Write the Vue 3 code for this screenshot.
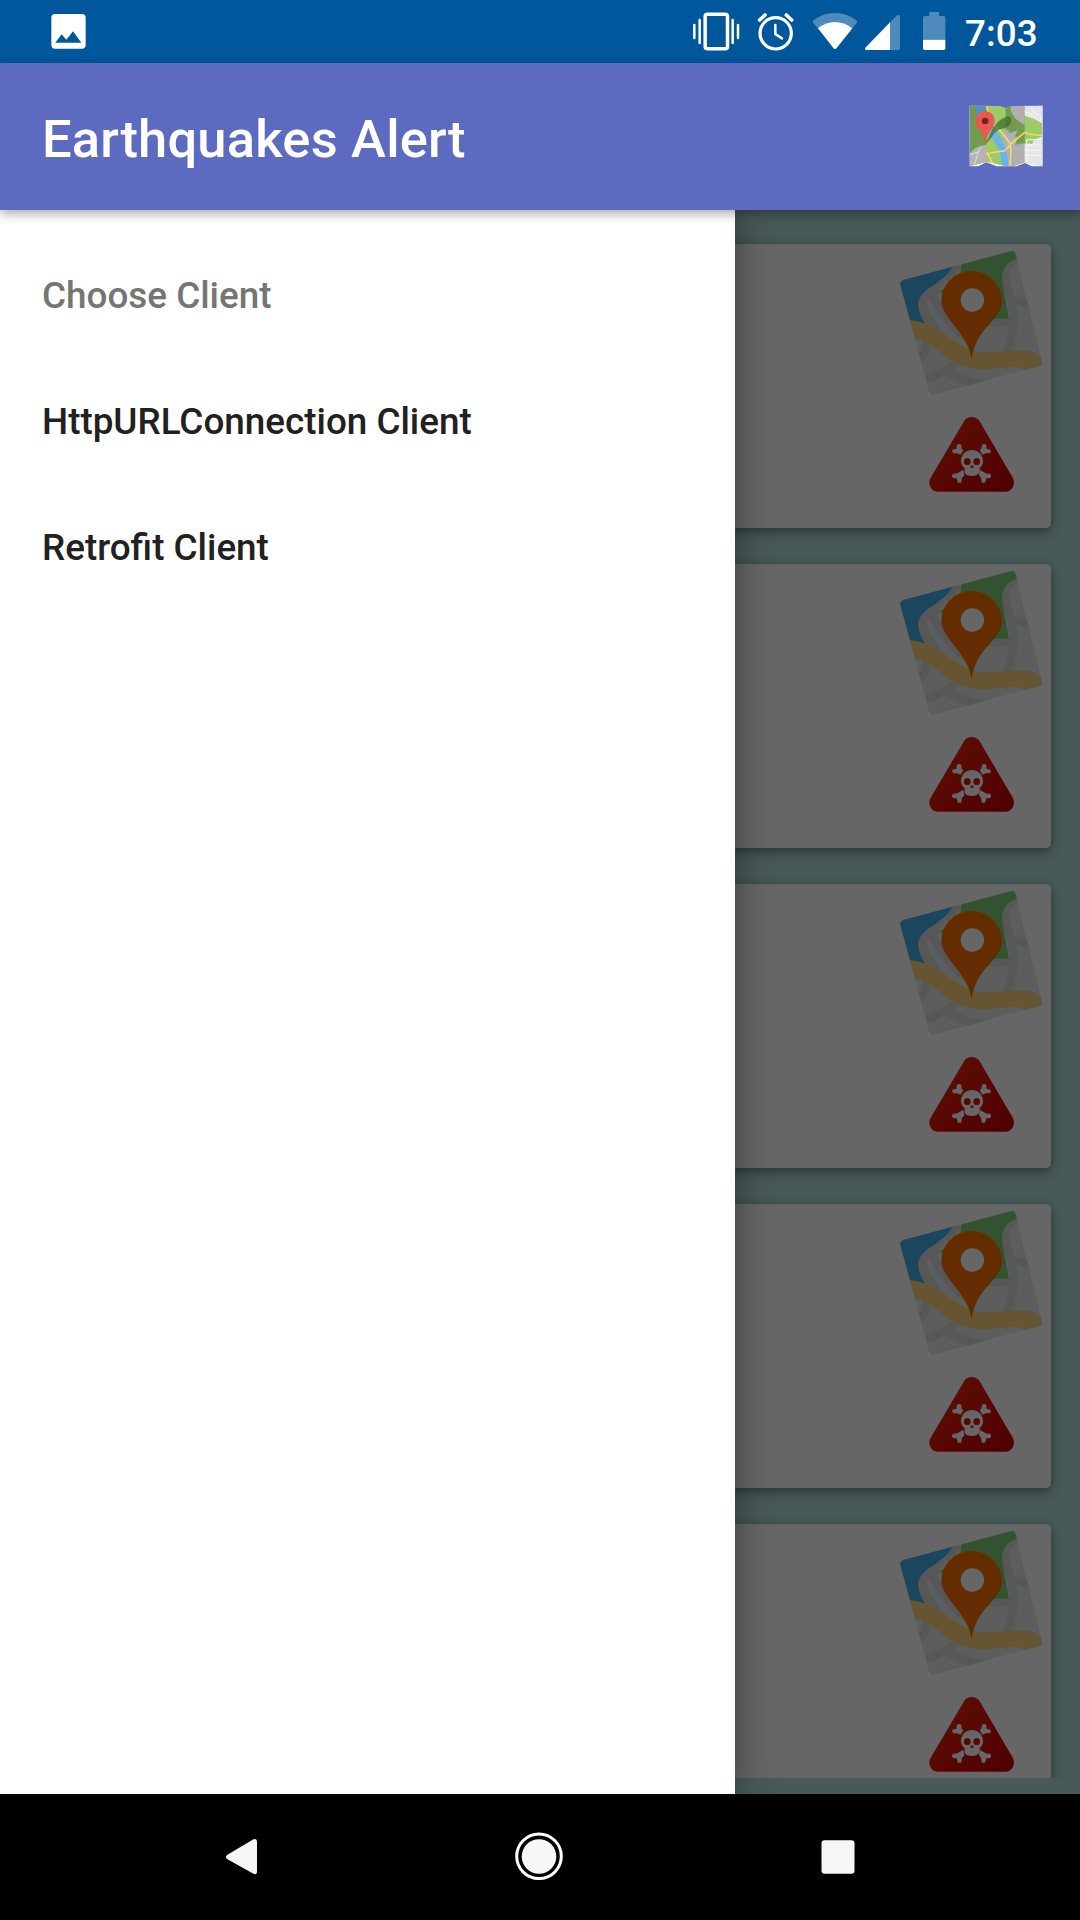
<script setup>
const clients = ['HttpURLConnection Client', 'Retrofit Client']
const cards = [1, 2, 3, 4, 5]
</script>

<template>
  <div class="screen">
    <header class="status">
      <svg class="picture" viewBox="150 0 111 189">
        <path fill="#fff" fill-rule="evenodd" d="M165 42H246Q257 42 257 53V135Q257 146 246 146H165Q154 146 154 135V53Q154 42 165 42ZM166 128H244L219 94L199 119L185 103Z" />
      </svg>
      <div class="indicators">
        <svg class="vibrate" viewBox="36 0 144 189">
          <rect x="75.500" y="42.500" width="67" height="104" rx="7" fill="none" stroke="#fff" stroke-width="10.500" />
          <path stroke="#fff" stroke-width="7.500" stroke-linecap="round" d="M59 60V129M158 60V129M43 75V114M174 75V114" />
        </svg>
        <svg class="alarm" viewBox="228 0 117 189">
          <circle cx="287" cy="100" r="47" fill="none" stroke="#fff" stroke-width="9.500" />
          <path fill="none" stroke="#fff" stroke-width="7.500" stroke-linecap="round" d="M286 75V102L306 115" />
          <path fill="none" stroke="#fff" stroke-width="11" stroke-linecap="round" d="M239 60L255 45M335 60L319 45" />
        </svg>
        <svg class="wifi" viewBox="396 0 138 189">
          <path fill="#4f8bba" d="M465 147L400 69Q396 64 401 61Q429 39 465 39Q501 39 529 61Q534 64 530 69Z" />
          <path fill="#fff" d="M460 144L414 85Q438 66 465 66Q492 66 517 85L470 144Q465 150 460 144Z" />
        </svg>
        <svg class="signal" viewBox="552 0 111 189">
          <path fill="#4f8bba" d="M629 68L651 46Q660 42 660 50V145Q660 150 655 150H629Z" />
          <path fill="#fff" d="M630 67V150H560Q552 149 556 143Z" />
        </svg>
        <svg class="battery" viewBox="726 0 72 189">
          <path fill="#4f8bba" d="M748 36H777V48H791Q796 48 796 53V119H729V53Q729 48 734 48H748Z" />
          <path fill="#fff" d="M729 119H796V145Q796 150 791 150H734Q729 150 729 145Z" />
        </svg>
        <span class="time">7:03</span>
      </div>
    </header>

    <div class="appbar">
      <h1>Earthquakes Alert</h1>
      <svg class="maplogo" viewBox="57 45 222 186">
        <defs>
          <clipPath id="fold"><path d="M59 48H149L167 54L188 48H277V228L224 217L190 228H167L109 215L59 228Z" /></clipPath>
        </defs>
        <path fill="#f6f6f8" d="M59 47L149 48L167 56L188 48L278 47V229H245L225 219L200 229H140L109 217L85 229H59Z" />
        <g clip-path="url(#fold)">
          <path fill="#9ccc65" d="M59 48H277V228H59Z" />
          <path fill="#729b4d" d="M59 48H110V228H59Z" />
          <path fill="#b4b4b6" d="M59 190Q80 165 111 164V228H59Z" />
          <path fill="#739c4e" d="M167 48H224V140H167Z" />
          <path fill="#b0b0b2" d="M181 48H224V105L205 93Q180 73 181 48Z" />
          <path fill="#e5e5e7" d="M224 48H277V100Q251 84 224 77Z" />
          <path fill="#b0b0b2" d="M150 125L174 119L179 129L203 121L190 151L224 163V228H163L164 158Z" />
          <path fill="#e6e6e8" d="M224 165L277 139V228H224Z" />
          <path fill="#9ccc65" d="M224 128L277 136V140L252 142L247 162L224 158Z" />
          <path fill="#739c4e" d="M203 142L224 128V160L196 164Z" />
          <path fill="#5192b7" d="M75 48H109L112 78L87 92Q71 71 75 48Z" />
          <path fill="#68b4e9" d="M118 103Q170 143 175 228H154Q148 160 115 133Z" />
          <path fill="#9ccc65" d="M106 165L124 147Q153 179 156 228H140Q130 198 106 174Z" />
          <path fill="none" stroke="#fdda65" stroke-width="4.500" d="M109 48L117 76M131 104Q170 141 181 163L223 128Q245 136 277 136M109 193Q129 185 163 183M110 186L132 228M181 163Q184 183 180 228M163 183L180 166" />
          <path fill="none" stroke="#dedede" stroke-width="3" d="M59 195L84 186L94 171M86 181L74 224" />
          <path fill="none" stroke="#f6f6f8" stroke-width="3" d="M229 150L277 147M224 165H277M224 181H277M224 196H277M230 148V216M243 52Q251 73 272 76V91M224 65L246 73L277 99" />
        </g>
        <path fill="#3d692f" fill-opacity=".72" d="M105 164L131 110Q151 84 170 80Q184 78 184 90Q183 108 164 115Q139 116 124 143Z" />
        <path fill="#e95950" d="M105 166Q105 141 91 122Q75 111 76 92A29 29 0 0 1 134 92Q134 108 121 122Q109 140 105 166Z" />
        <circle cx="105.500" cy="93" r="10" fill="#702321" />
      </svg>
    </div>

    <main class="body">
      <div class="list">
        <article v-for="card in cards" :key="card" class="card">
          <svg class="mappin" viewBox="60 45 432 435">
            <defs>
              <clipPath :id="'sheet' + card"><path d="M70 135L394 48Q403 46 406 55L487 382Q489 389 481 392L160 479Q151 481 148 472L61 149Q59 139 70 135Z" /></clipPath>
            </defs>
            <g :clip-path="`url(#sheet${card})`">
              <path fill="#e4eae7" d="M50 40H500V490H50Z" />
              <path fill="none" stroke="#dadada" stroke-width="25" d="M232 75C236 133 129 135 129 204C129 243 155 270 175 288M156 176C179 244 230 294 275 310M310 260L403 262M423 62C368 84 374 133 383 164C413 238 404 298 372 365M397 196Q430 196 455 210M136 315Q145 342 120 372M130 437C179 422 216 397 255 360M195 402Q242 441 305 445" />
              <path fill="#46acea" d="M50 125L217 94Q212 116 163 149C116 175 109 200 119 232Q123 249 139 270L85 257Z" />
              <path fill="#80ce78" d="M245 80L400 40L413 69Q357 88 368 146L387 253L300 248L178 170L240 125Z" />
              <path fill="none" stroke="#dadada" stroke-width="23" d="M154 177L176 160" />
              <path fill="#fdd77b" d="M85 257C128 254 163 280 203 304C247 330 264 350 305 352C352 354 387 344 436 345Q479 350 490 387L460 411H440Q428 396 414 396C368 394 337 405 292 402C215 395 182 343 132 320Q117 310 95 314Z" />
            </g>
            <path fill="#f96e00" fill-rule="evenodd" d="M275 376C272 335 242 295 216 263C198 239 184 222 184 197A91 89 0 0 1 366 197C366 222 351 241 331 264C305 292 278 329 275 376ZM277 160A35 35 0 1 0 277 230A35 35 0 1 0 277 160Z" />
            <circle cx="277" cy="195" r="35" fill="#fff" />
          </svg>
          <svg class="danger" viewBox="57 48 258 231">
            <defs>
              <linearGradient :id="'red' + card" x1="0" y1="0" x2="1" y2="1">
                <stop offset=".2" stop-color="#e62206" />
                <stop offset=".95" stop-color="#c40009" />
              </linearGradient>
            </defs>
            <path :fill="`url(#red${card})`" d="M163 62Q171 51 185 51Q199 51 208 62L307 231Q315 246 309 260Q301 275 286 275H83Q68 275 61 261Q54 247 62 233Z" />
            <g fill="#fff">
              <path d="M140 135Q146 130 154 134L155 146L160 151L151 164L142 160H130Q125 155 127 149Q132 147 140 146Z" />
              <path d="M229 135Q223 130 216 134L214 146L209 151L218 164L227 160H239Q244 155 242 149Q237 147 229 146Z" />
              <path d="M160 209L139 221Q130 220 126 225Q125 232 130 235H140L143 247Q149 250 154 247L156 234L163 226Z" />
              <path d="M209 209L230 221Q239 220 243 225Q244 232 239 235H229L226 247Q220 250 215 247L213 234L207 224Z" />
              <path d="M186 150C207 150 219 166 219 184Q219 196 209 204V217Q202 228 186 228Q170 228 164 219V205Q153 196 153 184C153 166 165 150 186 150Z" />
            </g>
            <g fill="#d61008">
              <circle cx="172" cy="185" r="10" /><circle cx="200" cy="185" r="10" />
              <path d="M186 194L191 201Q190 205 186 203Q182 205 181 201Z" />
            </g>
          </svg>
        </article>
      </div>
      <div class="scrim"></div>
      <nav class="drawer">
        <p class="heading">Choose Client</p>
        <p v-for="client in clients" :key="client">{{ client }}</p>
      </nav>
    </main>

    <footer class="navbar">
      <svg class="back" viewBox="0 0 34 126"><path fill="#f7f7f7" d="M2 61L28 45.500Q32 44 32 48V77Q32 82 28 79.500L2 65Q0 63 2 61Z" /></svg>
      <svg class="home" viewBox="0 0 50 126">
        <circle cx="25" cy="62.300" r="22.300" fill="none" stroke="#fff" stroke-width="3" />
        <circle cx="25" cy="62.500" r="17.300" fill="#f7f7f7" />
      </svg>
      <svg class="recent" viewBox="0 0 34 126"><rect x=".5" y="46.300" width="33" height="33.500" rx="3" fill="#f7f7f7" /></svg>
    </footer>
  </div>
</template>

<style>
html, body { margin: 0; background: #000; }
</style>

<style scoped>
.screen {
  width: 1080px;
  height: 1920px;
  display: flex;
  flex-direction: column;
  overflow: hidden;
  font-family: Roboto, "Noto Sans", sans-serif;
  font-weight: 500;
}
svg { display: block; flex: none; }
.status {
  height: 63px;
  flex: none;
  display: flex;
  justify-content: space-between;
  background: #01579b;
  color: #fff;
}
.status svg { height: 63px; }
.picture { width: 37px; margin-left: 50px; }
.indicators { display: flex; width: 388px; }
.vibrate { width: 48px; }
.alarm { width: 39px; margin-left: 16px; }
.wifi { width: 46px; margin-left: 17px; }
.signal { width: 37px; margin-left: 6px; }
.battery { width: 24px; margin-left: 21px; }
.time { margin-left: 19px; font-size: 36.75px; line-height: 67px; letter-spacing: .1px; }
.appbar {
  position: relative;
  z-index: 2;
  height: 147px;
  flex: none;
  display: flex;
  justify-content: space-between;
  background: #5c6bc0;
  color: #fff;
  box-shadow: 0 4px 10px rgba(0, 0, 0, .32);
}
h1 {
  margin: 0 0 0 42px;
  font-size: 52.5px;
  font-weight: 500;
  line-height: 152px;
  letter-spacing: .2px;
}
.maplogo { width: 74px; height: 62px; margin: 42px 37px 0 0; }
.body {
  position: relative;
  height: 1584px;
  flex: none;
  overflow: hidden;
  background: #b2dfdb;
}
.list {
  box-sizing: border-box;
  height: 1568px;
  overflow: hidden;
  padding: 34px 29px 0;
  display: flex;
  flex-direction: column;
  gap: 36px;
}
.card {
  box-sizing: border-box;
  height: 284px;
  flex: none;
  padding: 6px 7px 0;
  display: flex;
  flex-direction: column;
  align-items: flex-end;
  background: #fff;
  border-radius: 5px;
  box-shadow: 0 5px 12px rgba(0, 0, 0, .3), 0 0 8px rgba(0, 0, 0, .15);
}
.mappin { width: 144px; height: 145px; }
.danger { width: 86px; height: 77px; margin: 21px 29px 0 0; }
.scrim { position: absolute; inset: 0; background: rgba(0, 0, 0, .6); }
.drawer {
  position: absolute;
  inset: 0 auto 0 0;
  width: 735px;
  box-sizing: border-box;
  padding: 23px 42px;
  background: #fff;
  box-shadow: 0 0 36px rgba(0, 0, 0, .42);
}
.drawer p {
  margin: 0;
  height: 126px;
  font-size: 36.84px;
  line-height: 125px;
  color: #212121;
}
.drawer .heading { color: #757575; }
.navbar { height: 126px; flex: none; display: flex; background: #000; }
.navbar svg { height: 126px; }
.back { width: 34px; margin-left: 224.5px; }
.home { width: 50px; margin-left: 255.5px; }
.recent { width: 34px; margin-left: 257px; }
</style>
